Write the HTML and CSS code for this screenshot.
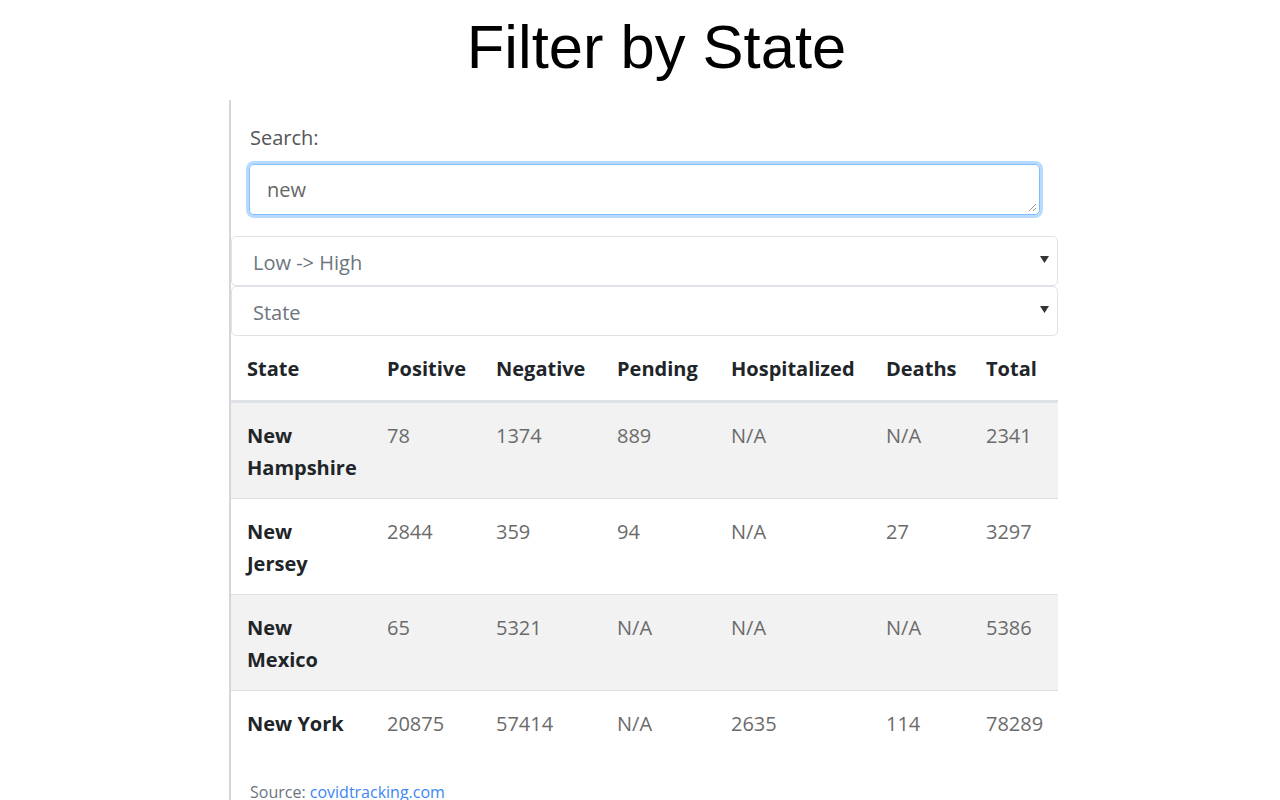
FILE: index.html
```html
<!DOCTYPE html>
<html>
<head>
<meta charset="utf-8">
<link rel="stylesheet" href="styles.css">
</head>
<body>
<h1 class="title">Filter by State</h1>
<div class="panel">
  <div class="search-group">
    <label class="search-label">Search:</label>
    <div class="textarea">new<svg class="grip" width="10" height="10" viewBox="0 0 10 10"><path d="M9 2 L2 9 M9 6 L6 9" stroke="#999" stroke-width="1" fill="none"/></svg></div>
  </div>
  <div class="select"><span class="select-text">Low -&gt; High</span><svg class="caret" width="9" height="7" viewBox="0 0 9 7"><path d="M0 0 H9 L4.5 7 Z" fill="#333"/></svg></div>
  <div class="select"><span class="select-text">State</span><svg class="caret" width="9" height="7" viewBox="0 0 9 7"><path d="M0 0 H9 L4.5 7 Z" fill="#333"/></svg></div>
  <table class="data">
    <colgroup>
      <col class="c-state"><col class="c-pos"><col class="c-neg"><col class="c-pend"><col class="c-hosp"><col class="c-death"><col class="c-total">
    </colgroup>
    <thead>
      <tr><th>State</th><th>Positive</th><th>Negative</th><th>Pending</th><th>Hospitalized</th><th>Deaths</th><th>Total</th></tr>
    </thead>
    <tbody>
      <tr class="odd"><th>New Hampshire</th><td>78</td><td>1374</td><td>889</td><td>N/A</td><td>N/A</td><td>2341</td></tr>
      <tr><th>New Jersey</th><td>2844</td><td>359</td><td>94</td><td>N/A</td><td>27</td><td>3297</td></tr>
      <tr class="odd"><th>New Mexico</th><td>65</td><td>5321</td><td>N/A</td><td>N/A</td><td>N/A</td><td>5386</td></tr>
      <tr><th class="nowrap">New York</th><td>20875</td><td>57414</td><td>N/A</td><td>2635</td><td>114</td><td>78289</td></tr>
    </tbody>
  </table>
  <p class="source">Source: <a class="link">covidtracking.com</a></p>
</div>
</body>
</html>
```
FILE: styles.css
```css
html, body {
  margin: 0;
  padding: 0;
  background: #fff;
  height: 800px;
  overflow: hidden;
}
.title {
  margin: 0;
  padding: 0 0 7px 33px;
  font-family: "Liberation Sans", Arial, sans-serif;
  font-weight: normal;
  font-size: 61.5px;
  line-height: 93px;
  text-align: center;
  color: #000;
}
.panel {
  margin-left: 229px;
  width: 827px;
  border-left: 2px solid #d6d6d6;
  height: 700px;
  font-family: "Open Sans", "Noto Sans", sans-serif;
  font-size: 20px;
  line-height: 32px;
  color: #212529;
}
.search-group {
  padding: 22px 18px 21px 18px;
}
.search-label {
  display: block;
  color: #555;
  margin-bottom: 10px;
  padding-left: 1px;
}
.textarea {
  position: relative;
  height: 33px;
  padding: 9px 17px 7px 17px;
  border: 1px solid #80bdff;
  border-radius: 5px;
  box-shadow: 0 0 0 3px rgba(0, 123, 255, 0.28);
  color: #666;
}
.grip {
  position: absolute;
  right: 2px;
  bottom: 2px;
}
.select {
  display: flex;
  align-items: center;
  justify-content: space-between;
  height: 48px;
  padding: 0 8px 0 21px;
  border: 1px solid #dfe2e6;
  border-radius: 5px;
  color: #6c757d;
}
.select-text {
  padding-top: 3px;
}
.caret {
  margin-top: -4px;
}
.data {
  width: 827px;
  border-collapse: collapse;
  table-layout: fixed;
}
.c-state { width: 140px; }
.c-pos { width: 109px; }
.c-neg { width: 121px; }
.c-pend { width: 114px; }
.c-hosp { width: 155px; }
.c-death { width: 100px; }
.c-total { width: 88px; }
.data thead th {
  text-align: left;
  font-weight: bold;
  color: #212529;
  padding: 17px 0 15px 16px;
  border-bottom: 3px solid #dee2e6;
  vertical-align: top;
}
.data tbody th,
.data tbody td {
  text-align: left;
  vertical-align: top;
  padding: 17px 0 14px 16px;
  border-top: 1px solid #dee2e6;
}
.data tbody th {
  font-weight: bold;
  color: #212529;
  padding-right: 24px;
}
.data tbody td {
  color: #6b6b6b;
}
.data tbody tr.odd {
  background: #f2f2f2;
}
.nowrap {
  white-space: nowrap;
}
.source {
  margin: 26px 0 0 19px;
  font-size: 16px;
  line-height: 24px;
  color: #6c757d;
}
.link {
  color: #3d86f5;
}
```
